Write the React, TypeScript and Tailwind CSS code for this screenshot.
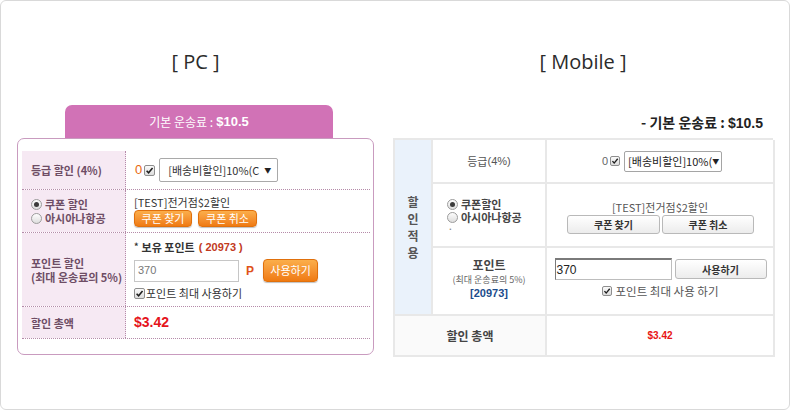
import React from 'react'

const kr = { fontFamily: '"Noto Sans CJK KR", "Noto Sans", sans-serif' }
const latin = { fontFamily: '"Liberation Sans", "Noto Sans CJK KR", sans-serif' }

function Check({ size = 11 }: { size?: number }) {
  return (
    <span
      className="inline-flex items-center justify-center border border-[#8e8e8e] rounded-[2px] bg-gradient-to-b from-[#fafafa] to-[#dcdcdc] shrink-0"
      style={{ width: size, height: size }}
    >
      <svg width={size - 2} height={size - 2} viewBox="0 0 10 10">
        <path d="M1.8 5.2 L4 7.6 L8.4 2.2" fill="none" stroke="#1e1e1e" strokeWidth="1.7" />
      </svg>
    </span>
  )
}

function Radio({ on }: { on?: boolean }) {
  return (
    <span className="inline-flex items-center justify-center w-[11px] h-[11px] rounded-full border border-[#9c9c9c] bg-gradient-to-b from-[#fdfdfd] to-[#dedede] shrink-0">
      {on && <span className="w-[5px] h-[5px] rounded-full bg-[#3a3a3a]" />}
    </span>
  )
}

function OrangeBtn({ children, className }: { children: React.ReactNode; className: string }) {
  return (
    <span
      className={`inline-flex items-center justify-center rounded-[4px] border border-[#e0700c] bg-gradient-to-b from-[#fbae4a] to-[#ef7a10] text-white text-[11px] shadow-[0_1px_1px_rgba(0,0,0,0.25)] ${className}`}
    >
      {children}
    </span>
  )
}

function GrayBtn({ children, className }: { children: React.ReactNode; className: string }) {
  return (
    <span
      className={`inline-flex items-center justify-center rounded-[3px] border border-[#b9b9b9] bg-gradient-to-b from-[#ffffff] to-[#ececec] text-[#333] text-[10px] font-bold ${className}`}
    >
      {children}
    </span>
  )
}

function PcPanel() {
  const row = 'flex border-b border-dotted border-[#b58ba9]'
  const label = 'w-[104px] bg-[#f6e9f3] border-r border-dotted border-[#b58ba9] pl-[9px] flex flex-col justify-center text-[11px] font-semibold text-[#6e4d65] leading-[14px]'
  return (
    <div className="w-[357px]">
      <div className="h-[28px] leading-[28px] text-center text-[20px] text-[#2b2b2b]" style={{ fontFamily: '"Open Sans", sans-serif' }}>
        [ PC ]
      </div>
      <div className="mt-[29px] ml-[48px] w-[268px] h-[33px] rounded-t-[7px] bg-[#d172b6] flex items-center justify-center text-white text-[12px]">
        <span>기본 운송료 : </span>
        <span className="font-bold ml-[3px] text-[13px]" style={latin}>$10.5</span>
      </div>
      <div className="h-[217px] border border-[#c99bbf] rounded-[7px] pt-[12px] pl-[4px] pr-[3px]">
        <div className="w-[348px]">
          <div className={`${row} h-[39px]`}>
            <div className={label}>등급 할인 (4%)</div>
            <div className="flex items-center pl-[9px] gap-[2px]">
              <span className="text-[13px] text-[#e8670e]" style={latin}>0</span>
              <Check />
              <span className="ml-[2px] w-[119px] h-[24px] border border-[#a9a9a9] rounded-[2px] flex items-center justify-between pl-[8px] pr-[6px] text-[11px] text-[#333] bg-white">
                <span>[배송비할인]10%(C</span>
                <span className="text-[7px] text-[#222]">▼</span>
              </span>
            </div>
          </div>
          <div className={`${row} h-[43px]`}>
            <div className={label}>
              <div className="flex items-center gap-[3px]"><Radio on />쿠폰 할인</div>
              <div className="flex items-center gap-[3px]"><Radio />아시아나항공</div>
            </div>
            <div className="flex flex-col pl-[8px] pt-[5px]">
              <span className="text-[11px] leading-[14px] text-[#333]">[TEST]전거점$2할인</span>
              <div className="flex gap-[6px] mt-[1px]">
                <OrangeBtn className="w-[58px] h-[17px]">쿠폰 찾기</OrangeBtn>
                <OrangeBtn className="w-[59px] h-[17px]">쿠폰 취소</OrangeBtn>
              </div>
            </div>
          </div>
          <div className={`${row} h-[74px]`}>
            <div className={label}>
              <span>포인트 할인</span>
              <span>(최대 운송료의 5%)</span>
            </div>
            <div className="flex flex-col pl-[8px] pt-[7px]">
              <div className="flex items-center text-[11px] leading-[14px] text-[#333] font-bold">
                <span className="text-[9px] mr-[3px]">*</span>보유 포인트
                <span className="ml-[4px] text-[#c23a1e]" style={latin}>( 20973 )</span>
              </div>
              <div className="flex items-center mt-[5px]">
                <span className="w-[105px] h-[22px] border border-[#c6c6c6] flex items-center pl-[3px] text-[11px] text-[#777]" style={latin}>370</span>
                <span className="ml-[7px] text-[12px] font-bold text-[#e0521a]" style={latin}>P</span>
                <OrangeBtn className="ml-[9px] w-[55px] h-[23px]">사용하기</OrangeBtn>
              </div>
              <div className="flex items-center mt-[5px] text-[11px] text-[#333] leading-[13px]">
                <Check />
                <span className="ml-[1px]">포인트 최대 사용하기</span>
              </div>
            </div>
          </div>
          <div className={`${row} h-[32px]`}>
            <div className={label}>할인 총액</div>
            <div className="flex items-center pl-[8px]">
              <span className="text-[14px] font-bold text-[#e5141c]" style={latin}>$3.42</span>
            </div>
          </div>
        </div>
      </div>
    </div>
  )
}

function MobilePanel() {
  const cell = 'border-r-2 border-b-2 border-[#e8e8e8]'
  return (
    <div className="w-[380px]">
      <div className="h-[28px] leading-[28px] text-center text-[20px] text-[#2b2b2b]" style={{ fontFamily: '"Open Sans", sans-serif' }}>
        [ Mobile ]
      </div>
      <div className="mt-[37px] h-[18px] leading-[18px] text-right pr-[10px] text-[14px] font-bold text-[#222]">
        - 기본 운송료 : <span style={latin}>$10.5</span>
      </div>
      <div className="mt-[7px] grid grid-cols-[38px_114px_228px] grid-rows-[44px_64px_68px_41px] border-t-2 border-l-2 border-[#e8e8e8]">
        <div className={`${cell} row-span-3 bg-[#eaf2fb] flex flex-col items-center justify-center text-[12px] font-bold text-[#555] leading-[17px]`}>
          <span>할</span>
          <span>인</span>
          <span>적</span>
          <span>용</span>
        </div>
        <div className={`${cell} flex items-center justify-center text-[11px] text-[#555]`}>
          등급<span style={latin}>(4%)</span>
        </div>
        <div className={`${cell} flex items-center justify-center gap-[2px] pl-[4px]`}>
          <span className="text-[11px] text-[#666]" style={latin}>0</span>
          <Check size={10} />
          <span className="ml-[2px] w-[98px] h-[21px] border border-[#a5a5a5] rounded-[2px] flex items-center justify-between pl-[3px] pr-[5px] text-[11px] text-[#222] bg-white overflow-hidden whitespace-nowrap">
            <span>[배송비할인]10%(</span>
            <span className="text-[7px]">▼</span>
          </span>
        </div>
        <div className={`${cell} flex flex-col justify-center pl-[14px] pt-[2px] text-[11px] font-bold text-[#444] leading-[13px]`}>
          <div className="flex items-center gap-[3px]"><Radio on />쿠폰할인</div>
          <div className="flex items-center gap-[3px]"><Radio />아시아나항공</div>
          <div className="text-[8px] leading-[10px] text-[#888] pl-[1px]">·</div>
        </div>
        <div className={`${cell} flex flex-col items-center justify-center pt-[3px]`}>
          <span className="text-[11px] leading-[14px] text-[#555]">[TEST]전거점$2할인</span>
          <div className="flex gap-[2px] mt-[1px] pl-[1px]">
            <GrayBtn className="w-[93px] h-[19px]">쿠폰 찾기</GrayBtn>
            <GrayBtn className="w-[92px] h-[19px]">쿠폰 취소</GrayBtn>
          </div>
        </div>
        <div className={`${cell} flex flex-col items-center justify-center pb-[4px]`}>
          <span className="text-[12px] font-bold text-[#444] leading-[16px]">포인트</span>
          <span className="text-[9px] text-[#666] leading-[13px]">(최대 운송료의 5%)</span>
          <span className="text-[11px] font-bold text-[#1b4c8c] leading-[15px]" style={latin}>[20973]</span>
        </div>
        <div className={`${cell} flex flex-col items-center justify-center pb-[6px]`}>
          <div className="flex items-center gap-[3px] pl-[1px]">
            <span className="w-[117px] h-[22px] border border-[#bdbdbd] border-t-[#7a7a7a] border-l-[#7a7a7a] border-t-2 flex items-center pl-[1px] text-[12px] text-[#222] bg-white" style={latin}>370</span>
            <GrayBtn className="w-[92px] h-[20px]">사용하기</GrayBtn>
          </div>
          <div className="flex items-center gap-[4px] mt-[4px] text-[11.5px] text-[#555] leading-[14px]">
            <Check size={10} />
            <span>포인트 최대 사용 하기</span>
          </div>
        </div>
        <div className={`${cell} col-span-2 bg-[#fafafa] flex items-center justify-center text-[12px] font-bold text-[#444]`}>
          할인 총액
        </div>
        <div className={`${cell} flex items-center justify-center`}>
          <span className="text-[10px] font-bold text-[#e81414]" style={latin}>$3.42</span>
        </div>
      </div>
    </div>
  )
}

export default function App() {
  return (
    <div className="w-[790px] h-[410px] bg-white border border-[#d9d9d9] rounded-[6px] flex" style={kr}>
      <div className="w-[389px] pl-[16px] pt-[47px]">
        <PcPanel />
      </div>
      <div className="w-[399px] pl-[3px] pt-[47px]">
        <MobilePanel />
      </div>
    </div>
  )
}
